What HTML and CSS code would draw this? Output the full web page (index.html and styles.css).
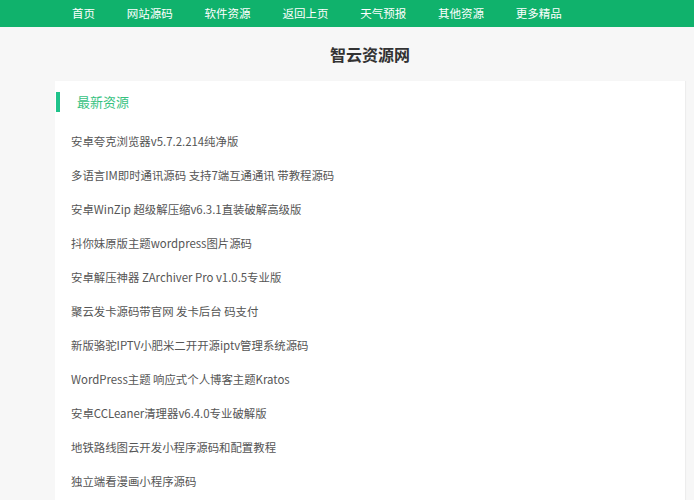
FILE: index.html
```html
<!DOCTYPE html>
<html lang="zh-CN">
<head>
<meta charset="utf-8">
<title>智云资源网</title>
<link rel="stylesheet" href="styles.css">
</head>
<body>
<nav class="nav">
  <a class="nav-item">首页</a>
  <a class="nav-item">网站源码</a>
  <a class="nav-item">软件资源</a>
  <a class="nav-item">返回上页</a>
  <a class="nav-item">天气预报</a>
  <a class="nav-item">其他资源</a>
  <a class="nav-item">更多精品</a>
</nav>
<div class="container">
  <h1 class="title">智云资源网</h1>
  <section class="card">
    <h2 class="card-head">最新资源</h2>
    <ul class="list">
      <li>安卓夸克浏览器v5.7.2.214纯净版</li>
      <li>多语言IM即时通讯源码 支持7端互通通讯 带教程源码</li>
      <li>安卓WinZip 超级解压缩v6.3.1直装破解高级版</li>
      <li>抖你妹原版主题wordpress图片源码</li>
      <li>安卓解压神器 ZArchiver Pro v1.0.5专业版</li>
      <li>聚云发卡源码带官网 发卡后台 码支付</li>
      <li>新版骆驼IPTV小肥米二开开源iptv管理系统源码</li>
      <li>WordPress主题 响应式个人博客主题Kratos</li>
      <li>安卓CCLeaner清理器v6.4.0专业破解版</li>
      <li>地铁路线图云开发小程序源码和配置教程</li>
      <li>独立端看漫画小程序源码</li>
    </ul>
  </section>
</div>
</body>
</html>
```

FILE: styles.css
```css
html, body {
  margin: 0;
  padding: 0;
}
body {
  background: #f7f7f7;
  font-family: "Noto Sans CJK SC", "Liberation Sans", sans-serif;
  overflow: hidden;
}
.nav {
  height: 27px;
  background: #10b26c;
  display: flex;
  align-items: center;
  padding-left: 72px;
  gap: 31.8px;
}
.nav-item {
  color: #ffffff;
  font-size: 11.5px;
  line-height: 27px;
}
.container {
  margin-left: 55px;
  width: 630px;
}
.title {
  margin: 0;
  height: 54px;
  line-height: 54px;
  text-align: center;
  font-size: 16px;
  font-weight: bold;
  color: #333333;
}
.card {
  background: #ffffff;
  padding-top: 11px;
  box-shadow: 1px 0 1px rgba(0,0,0,0.04);
  min-height: 500px;
}
.card-head {
  margin: 0 0 0 1px;
  border-left: 4px solid #1fc38b;
  height: 20px;
  line-height: 20px;
  padding-left: 17px;
  font-size: 13px;
  font-weight: normal;
  color: #37c27f;
}
.list {
  list-style: none;
  margin: 12px 0 0 0;
  padding: 0 0 0 16px;
}
.list li {
  height: 34px;
  line-height: 34px;
  font-size: 11.4px;
  color: #555555;
}
```
